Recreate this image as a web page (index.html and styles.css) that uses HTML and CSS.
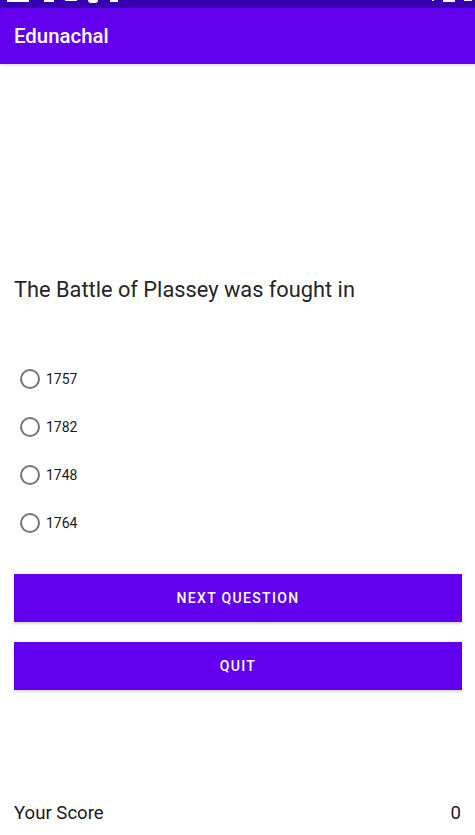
FILE: index.html
```html
<!DOCTYPE html>
<html>
<head>
<meta charset="utf-8">
<link rel="stylesheet" href="styles.css">
</head>
<body>
<div class="status">
  <div class="status-left">
    <span class="sb sb-time"></span>
    <span class="sb sb-a"></span>
    <span class="sb sb-b"></span>
    <span class="sb sb-c"></span>
    <span class="sb sb-d"></span>
  </div>
  <div class="status-right">
    <span class="sb sb-e"></span>
    <span class="sb sb-f"></span>
    <span class="sb sb-g"></span>
  </div>
</div>
<header class="appbar">Edunachal</header>
<main class="content">
  <p class="question">The Battle of Plassey was fought in</p>
  <div class="options">
    <label class="option"><span class="radio"></span><span>1757</span></label>
    <label class="option"><span class="radio"></span><span>1782</span></label>
    <label class="option"><span class="radio"></span><span>1748</span></label>
    <label class="option"><span class="radio"></span><span>1764</span></label>
  </div>
  <button class="btn btn-next">NEXT QUESTION</button>
  <button class="btn btn-quit">QUIT</button>
  <div class="score">
    <span>Your Score</span>
    <span>0</span>
  </div>
</main>
</body>
</html>
```

FILE: styles.css
```css
* { box-sizing: border-box; }
html, body { margin: 0; padding: 0; background: #fff; }
body {
  width: 475px;
  height: 835px;
  overflow: hidden;
  font-family: Roboto, "Noto Sans", sans-serif;
  color: #212121;
}
.status {
  height: 8px;
  background: #3700B3;
  display: flex;
  justify-content: space-between;
  align-items: flex-start;
  padding: 0 3px 0 7px;
}
.status-left, .status-right { display: flex; align-items: flex-start; }
.sb { display: block; background: #fff; height: 2px; }
.sb-time { width: 22px; margin-right: 15px; }
.sb-a { width: 10px; margin-right: 11px; }
.sb-b { width: 12px; margin-right: 11px; height: 1px; }
.sb-c { width: 10px; margin-right: 12px; border-radius: 0 0 5px 5px; height: 3px; }
.sb-d { width: 8px; }
.sb-e { width: 2px; margin-right: 9px; height: 1px; }
.sb-f { width: 12px; margin-right: 9px; }
.sb-g { width: 8px; height: 1px; }
.appbar {
  height: 56px;
  background: #6200EE;
  color: #fff;
  font-size: 20.4px;
  font-weight: 500;
  padding-left: 14px;
  display: flex;
  align-items: center;
  box-shadow: 0 1px 3px rgba(0,0,0,0.18);
  position: relative;
}
.content {
  padding: 0 13px 0 14px;
  display: flex;
  flex-direction: column;
}
.question {
  margin: 212px 0 0;
  font-size: 21.8px;
  line-height: 28px;
  color: #262626;
}
.options {
  margin-top: 51px;
  display: flex;
  flex-direction: column;
}
.option {
  height: 48px;
  display: flex;
  align-items: center;
  font-size: 14px;
  color: #1a1a1a;
}
.radio {
  width: 20px;
  height: 20px;
  border: 2px solid #757575;
  border-radius: 50%;
  margin: 0 6px 0 6px;
}
.btn {
  height: 48px;
  border: none;
  border-radius: 0;
  background: #6200EE;
  color: #fff;
  font-family: Roboto, sans-serif;
  font-size: 14px;
  font-weight: 500;
  letter-spacing: 1.35px;
  width: 448px;
  box-shadow: 0 2px 2px rgba(0,0,0,0.16);
  padding: 0;
}
.btn-next { margin-top: 27px; }
.btn-quit { margin-top: 20px; }
.score {
  margin-top: 111px;
  display: flex;
  justify-content: space-between;
  font-size: 18.6px;
  line-height: 24px;
  color: #1a1a1a;
  padding-right: 1px;
}
```
